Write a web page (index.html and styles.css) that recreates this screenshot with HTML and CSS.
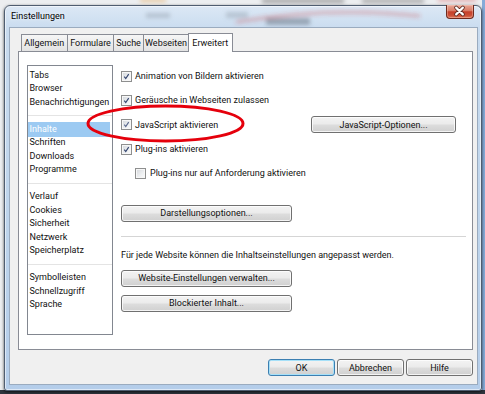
FILE: index.html
```html
<!DOCTYPE html>
<html lang="de">
<head>
<meta charset="utf-8">
<title>Einstellungen</title>
<link rel="stylesheet" href="styles.css">
</head>
<body>
<div class="window">
  <div class="titlebar">
    <span class="title">Einstellungen</span>
    <span class="close" aria-label="Schließen">
      <svg viewBox="0 0 28 14" width="28" height="14"><path class="x-out" d="M10.5 3.5 17.5 10.5 M17.5 3.5 10.5 10.5"/><path class="x-in" d="M10.5 3.5 17.5 10.5 M17.5 3.5 10.5 10.5"/></svg>
    </span>
  </div>
  <div class="client">
    <div class="tabs">
      <div class="tab t-allg">Allgemein</div>
      <div class="tab t-form">Formulare</div>
      <div class="tab t-such">Suche</div>
      <div class="tab t-web">Webseiten</div>
      <div class="tab t-erw active">Erweitert</div>
    </div>
    <div class="panel">
      <ul class="list">
        <li>Tabs</li>
        <li>Browser</li>
        <li>Benachrichtigungen</li>
        <li class="sep"></li>
        <li class="selected">Inhalte</li>
        <li>Schriften</li>
        <li>Downloads</li>
        <li>Programme</li>
        <li class="sep"></li>
        <li>Verlauf</li>
        <li>Cookies</li>
        <li>Sicherheit</li>
        <li>Netzwerk</li>
        <li>Speicherplatz</li>
        <li class="sep"></li>
        <li>Symbolleisten</li>
        <li>Schnellzugriff</li>
        <li>Sprache</li>
      </ul>
      <div class="content">
        <div class="row"><span class="cb"><svg viewBox="0 0 11 11"><path d="M2.8 5.6 4.6 8 8.2 2.6"/></svg></span><span>Animation von Bildern aktivieren</span></div>
        <div class="row"><span class="cb"><svg viewBox="0 0 11 11"><path d="M2.8 5.6 4.6 8 8.2 2.6"/></svg></span><span>Geräusche in Webseiten zulassen</span></div>
        <div class="row"><span class="cb soft"><svg viewBox="0 0 11 11"><path d="M2.8 5.6 4.6 8 8.2 2.6"/></svg></span><span>JavaScript aktivieren</span><span class="btn js">JavaScript-Optionen...</span></div>
        <div class="row"><span class="cb"><svg viewBox="0 0 11 11"><path d="M2.8 5.6 4.6 8 8.2 2.6"/></svg></span><span>Plug-ins aktivieren</span></div>
        <div class="row sub"><span class="cb empty"></span><span>Plug-ins nur auf Anforderung aktivieren</span></div>
        <span class="btn wide first">Darstellungsoptionen...</span>
        <div class="divider"></div>
        <p class="note">Für jede Website können die Inhaltseinstellungen angepasst werden.</p>
        <span class="btn wide site">Website-Einstellungen verwalten...</span>
        <span class="btn wide blocked">Blockierter Inhalt...</span>
      </div>
    </div>
    <div class="footer">
      <span class="btn foot default">OK</span>
      <span class="btn foot">Abbrechen</span>
      <span class="btn foot">Hilfe</span>
    </div>
  </div>
</div>
<svg class="overlay" width="485" height="394" viewBox="0 0 485 394">
  <defs>
    <filter id="blur" x="-20%" y="-50%" width="140%" height="200%"><feGaussianBlur stdDeviation="2.2"/></filter>
    <clipPath id="tb"><rect x="5" y="6" width="440" height="21"/></clipPath>
  </defs>
  <g filter="url(#blur)" opacity="0.55">
    <rect x="262" y="-1" width="82" height="4" fill="#5d5d5d"/>
    <rect x="362" y="-1" width="62" height="4" fill="#6a6a6a"/>
    <rect x="140" y="-1" width="26" height="3" fill="#e3a04a"/>
    <rect x="438" y="-1" width="38" height="2" fill="#d02020"/>
  </g>
  <g clip-path="url(#tb)" filter="url(#blur)">
    <rect x="146" y="13" width="24" height="5" fill="#8d9aa8" opacity="0.45"/>
    <rect x="226" y="12" width="22" height="6" fill="#7e8b98" opacity="0.35"/>
    <rect x="266" y="18" width="44" height="7" fill="#55606d" opacity="0.45"/>
    <path d="M236 22 Q330 6 420 16" stroke="#c84040" stroke-width="3" fill="none" opacity="0.35"/>
  </g>
  <ellipse class="mark" cx="165.5" cy="123.5" rx="77.5" ry="17.5"/>
</svg>
</body>
</html>
```
FILE: styles.css
```css
* {
  box-sizing: border-box;
  margin: 0;
  padding: 0;
}

html, body {
  width: 485px;
  height: 394px;
  overflow: hidden;
}

body {
  font-family: Roboto, "Liberation Sans", Arial, sans-serif;
  font-size: 9px;
  color: #111;
  padding: 5px 0 0 4px;
  background:
    linear-gradient(to bottom, transparent 390px, #2f353e 390px),
    linear-gradient(to right, transparent 482px, #86abd8 482px),
    #eceef0;
}

.window {
  width: 478px;
  height: 386px;
  border: 1px solid #4f5d70;
  border-radius: 6px 6px 3px 3px;
  padding: 0 3px 5px 4px;
  background: linear-gradient(to bottom, #dce8f5 0, #c8dbef 24px, #bdd4ec 60%, #b4cdea 100%);
  box-shadow: 0 1px 3px rgba(0, 0, 0, 0.7), inset 0 0 0 1px rgba(255, 255, 255, 0.55);
  display: flex;
  flex-direction: column;
}

.titlebar {
  height: 21px;
  display: flex;
  align-items: flex-start;
  padding-left: 2px;
}

.title {
  margin-top: 4px;
  line-height: 13px;
  color: #000;
  text-shadow: 0 0 4px rgba(255, 255, 255, 0.9);
}

.close {
  margin-left: auto;
  margin-right: 4px;
  margin-top: -1px;
  width: 28px;
  height: 14px;
  border: 1px solid #6e2a1e;
  border-top: none;
  border-radius: 0 0 4px 4px;
  background: linear-gradient(to bottom, #e8a898 0, #d97a64 45%, #c5402a 52%, #cc4f36 80%, #e07a5c 100%);
  box-shadow: inset 0 0 0 1px rgba(255, 220, 210, 0.35);
  display: flex;
}

.close svg {
  display: block;
  margin: -1px 0 0 -1px;
}

.x-out {
  stroke: #5a2a22;
  stroke-width: 4;
  stroke-linecap: round;
  fill: none;
}

.x-in {
  stroke: #fff;
  stroke-width: 2.2;
  stroke-linecap: round;
  fill: none;
}

.client {
  width: 469px;
  height: 358px;
  background: #f0f0f0;
  border: 1px solid #9aabbf;
  padding: 0 4px 0 8px;
  display: flex;
  flex-direction: column;
}

.tabs {
  display: flex;
  align-items: flex-end;
  height: 17px;
  margin-top: 6px;
  padding-left: 2.5px;
  position: relative;
  z-index: 1;
}

.tab {
  height: 17px;
  line-height: 16px;
  text-align: center;
  border: 1px solid #898c95;
  border-bottom: none;
  margin-right: -1px;
  background: linear-gradient(to bottom, #f6f6f6 0, #ececec 50%, #e3e3e3 100%);
  white-space: nowrap;
  overflow: hidden;
}

.t-allg { width: 47.5px; }
.t-form { width: 47px; }
.t-such { width: 31px; }
.t-web { width: 46px; }
.t-erw { width: 44.5px; }

.tab.active {
  height: 19px;
  line-height: 18px;
  margin-bottom: -1px;
  background: #fff;
}

.panel {
  width: 455px;
  height: 299px;
  border: 1px solid #898c95;
  background: #fff;
  display: flex;
  align-items: flex-start;
  gap: 8px;
  padding: 13px 5px 0 8px;
}

.list {
  list-style: none;
  width: 86px;
  height: 270px;
  border: 1px solid #828790;
  padding-top: 2.5px;
  flex: none;
}

.list li {
  height: 13.5px;
  line-height: 13.5px;
  padding-left: 1.5px;
  white-space: nowrap;
  color: #111;
}

.list li.sep {
  background: linear-gradient(to bottom, transparent 6px, #e4e4e4 6px, #e4e4e4 7px, transparent 7px);
}

.list li.selected {
  background: #9ccaf2;
  color: #fff;
  margin-right: 2px;
  box-shadow: 0 -1px 0 #9ccaf2, 0 1px 0 #9ccaf2;
}

.content {
  width: 345px;
  margin-top: -1px;
  display: flex;
  flex-direction: column;
  align-items: flex-start;
}

.row {
  height: 24.3px;
  width: 100%;
  display: flex;
  align-items: center;
  white-space: nowrap;
}

.row.sub {
  padding-left: 14px;
}

.cb {
  width: 11px;
  height: 11px;
  flex: none;
  margin-right: 3px;
  border: 1px solid #8e8f8f;
  background: linear-gradient(135deg, #d3d6da 0, #eef0f2 60%, #fbfbfb 100%);
  box-shadow: inset 0 0 0 1px #f7f7f7;
}

.row.sub .cb {
  margin-right: 4px;
}

.cb svg {
  display: block;
  width: 9px;
  height: 9px;
}

.cb path {
  fill: none;
  stroke: #33446e;
  stroke-width: 1.4;
}

.cb.soft path {
  stroke: #59688c;
}

.btn {
  display: flex;
  align-items: center;
  justify-content: center;
  height: 17px;
  border: 1px solid #707070;
  border-radius: 3px;
  background: linear-gradient(to bottom, #f3f3f3 0, #ebebeb 48%, #dddddd 52%, #d0d0d0 100%);
  box-shadow: inset 0 0 0 1px rgba(255, 255, 255, 0.75);
  color: #111;
  white-space: nowrap;
}

.btn.js {
  width: 145px;
  margin-left: auto;
  margin-right: 10px;
}

.btn.wide {
  width: 171px;
}

.btn.first {
  margin-top: 19.5px;
}

.divider {
  width: 100%;
  height: 1px;
  background: #d5d5d5;
  margin-top: 14px;
}

.note {
  line-height: 15px;
  margin-top: 11.5px;
  white-space: nowrap;
}

.btn.site {
  margin-top: 6.5px;
}

.btn.blocked {
  margin-top: 8px;
}

.footer {
  display: flex;
  justify-content: flex-end;
  gap: 2px;
  margin-top: 9px;
}

.btn.foot {
  width: 67px;
}

.btn.default {
  border-color: #3c7fb1;
  box-shadow: inset 0 0 0 1px #a6e0f8;
}

.overlay {
  position: absolute;
  left: 0;
  top: 0;
  pointer-events: none;
}

.mark {
  fill: none;
  stroke: #e5000c;
  stroke-width: 3;
}
```
